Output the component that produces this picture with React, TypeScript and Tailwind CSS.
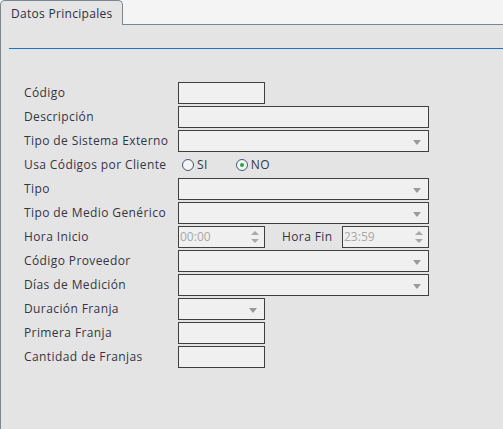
import React from "react";

const font = { fontFamily: '"Open Sans", "Noto Sans", sans-serif' };

function Arrow() {
  return (
    <svg width="8" height="5" viewBox="0 0 8 5" className="absolute right-[7px] top-[9px]">
      <path d="M0 0 H8 L4 5 Z" fill="#9a9a9a" />
    </svg>
  );
}

function Spinner() {
  return (
    <svg width="8" height="14" viewBox="0 0 8 14" className="absolute right-[5px] top-[3px]">
      <path d="M0 5 L4 1 L8 5 Z" fill="#a8a8a8" />
      <path d="M0 9 H8 L4 13 Z" fill="#a8a8a8" />
    </svg>
  );
}

function Box({ w, select, children }: { w: string; select?: boolean; children?: React.ReactNode }) {
  return (
    <div className={`relative h-[22px] ${w} border border-[#3f3f3f] bg-[#f0f0f0]`}>
      {children}
      {select && <Arrow />}
    </div>
  );
}

function Row({ label, children }: { label: string; children: React.ReactNode }) {
  return (
    <div className="flex h-[22px] items-center">
      <div className="w-[154px] text-[12px] tracking-[0.4px] text-[#353545]">{label}</div>
      {children}
    </div>
  );
}

function Radio({ checked, label }: { checked?: boolean; label: string }) {
  return (
    <div className="flex items-center">
      <div className="flex h-[12px] w-[12px] items-center justify-center rounded-full border border-[#3f5a7a] bg-[#f4f4f4]">
        {checked && <div className="h-[4px] w-[4px] rounded-full bg-[#22aa33]" />}
      </div>
      <span className="ml-[3px] text-[12px] tracking-[0.4px] text-[#353545]">{label}</span>
    </div>
  );
}

export default function App() {
  return (
    <div className="h-[429px] w-[503px] overflow-hidden bg-[#f4f4f4]" style={font}>
      <div className="flex h-[25px]">
        <div className="h-[25px] w-[123px] rounded-t-[5px] border-x border-t border-[#7b8790] bg-[#e4e4e4] pl-[10px] pt-[4px] text-[12px] tracking-[0.3px] text-[#2f2f3f]">
          Datos Principales
        </div>
        <div className="flex-1 border-b border-[#7b8790]" />
      </div>
      <div className="h-[404px] border-l border-[#7b8790] bg-[#e4e4e4] pl-[8px]">
        <div className="h-[23px]" />
        <div className="h-[1px] bg-[#1a74c8]" />
        <div className="flex flex-col gap-[2px] pl-[15px] pt-[33px]">
          <Row label="Código"><Box w="w-[87px]" /></Row>
          <Row label="Descripción"><Box w="w-[251px]" /></Row>
          <Row label="Tipo de Sistema Externo"><Box w="w-[251px]" select /></Row>
          <Row label="Usa Códigos por Cliente">
            <div className="flex items-center gap-[28px] pl-[4px]">
              <Radio label="SI" />
              <Radio label="NO" checked />
            </div>
          </Row>
          <Row label="Tipo"><Box w="w-[251px]" select /></Row>
          <Row label="Tipo de Medio Genérico"><Box w="w-[251px]" select /></Row>
          <Row label="Hora Inicio">
            <Box w="w-[87px]">
              <div className="pl-[1px] text-[12px] leading-[20px] text-[#a8a8a8]">00:00</div>
              <Spinner />
            </Box>
            <div className="w-[77px] pl-[17px] text-[12px] tracking-[0.4px] text-[#353545]">Hora Fin</div>
            <Box w="w-[87px]">
              <div className="pl-[1px] text-[12px] leading-[20px] text-[#a8a8a8]">23:59</div>
              <Spinner />
            </Box>
          </Row>
          <Row label="Código Proveedor"><Box w="w-[251px]" select /></Row>
          <Row label="Días de Medición"><Box w="w-[251px]" select /></Row>
          <Row label="Duración Franja"><Box w="w-[87px]" select /></Row>
          <Row label="Primera Franja"><Box w="w-[87px]" /></Row>
          <Row label="Cantidad de Franjas"><Box w="w-[87px]" /></Row>
        </div>
      </div>
    </div>
  );
}
